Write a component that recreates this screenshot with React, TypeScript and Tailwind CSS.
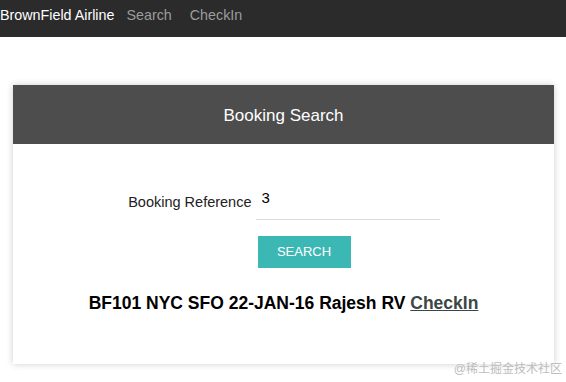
import React, { useState } from 'react';

export default function App() {
  const [bookingRef, setBookingRef] = useState('3');

  return (
    <div className="relative w-[566px] h-[382px] bg-white overflow-hidden font-['Liberation_Sans',Arial,sans-serif]">
      {/* top navbar */}
      <nav className="h-[37px] bg-[#2b2b2b] flex items-center text-[14.3px]">
        <span className="text-white -mt-[6px]">BrownField Airline</span>
        <a className="ml-[12px] text-[#9c9c9c] -mt-[6px]">Search</a>
        <a className="ml-[18px] text-[#9c9c9c] -mt-[6px]">CheckIn</a>
      </nav>

      {/* booking card */}
      <div className="ml-[13px] mr-[12px] mt-[48px] bg-white shadow-[0_0_7px_rgba(0,0,0,0.2)]">
        <div className="h-[59px] bg-[#4d4d4d] flex items-center justify-center">
          <h3 className="text-white text-[17px] mt-[2px]">Booking Search</h3>
        </div>

        <div className="pt-[44px] pb-[49px]">
          <div className="w-[312px] mx-auto">
            <div className="flex items-start">
              <label className="flex-1 text-right pr-[4px] text-[14.5px] leading-[20px] text-[#222] mt-[4px]">
                Booking Reference
              </label>
              <input
                value={bookingRef}
                onChange={e => setBookingRef(e.target.value)}
                className="w-[184px] h-[32px] border-b border-[#dcdcdc] pl-[6px] pb-[12px] text-[15px] text-black outline-none"
              />
            </div>
            <div className="pl-[130px] mt-[16px]">
              <button className="w-[93px] h-[32px] bg-[#3cb8b4] text-white text-[13px]">SEARCH</button>
            </div>
          </div>

          <p className="mt-[23px] text-center text-[17.5px] leading-[24px] font-bold text-black">
            BF101 NYC SFO 22-JAN-16 Rajesh RV{' '}
            <a className="underline text-[#3b4744]">CheckIn</a>
          </p>
        </div>
      </div>

      <span className="absolute right-[4px] bottom-[4px] text-[12px] text-[#bdbdbd] font-['Liberation_Sans','Noto_Sans_CJK_SC',sans-serif]">
        @稀土掘金技术社区
      </span>
    </div>
  );
}
